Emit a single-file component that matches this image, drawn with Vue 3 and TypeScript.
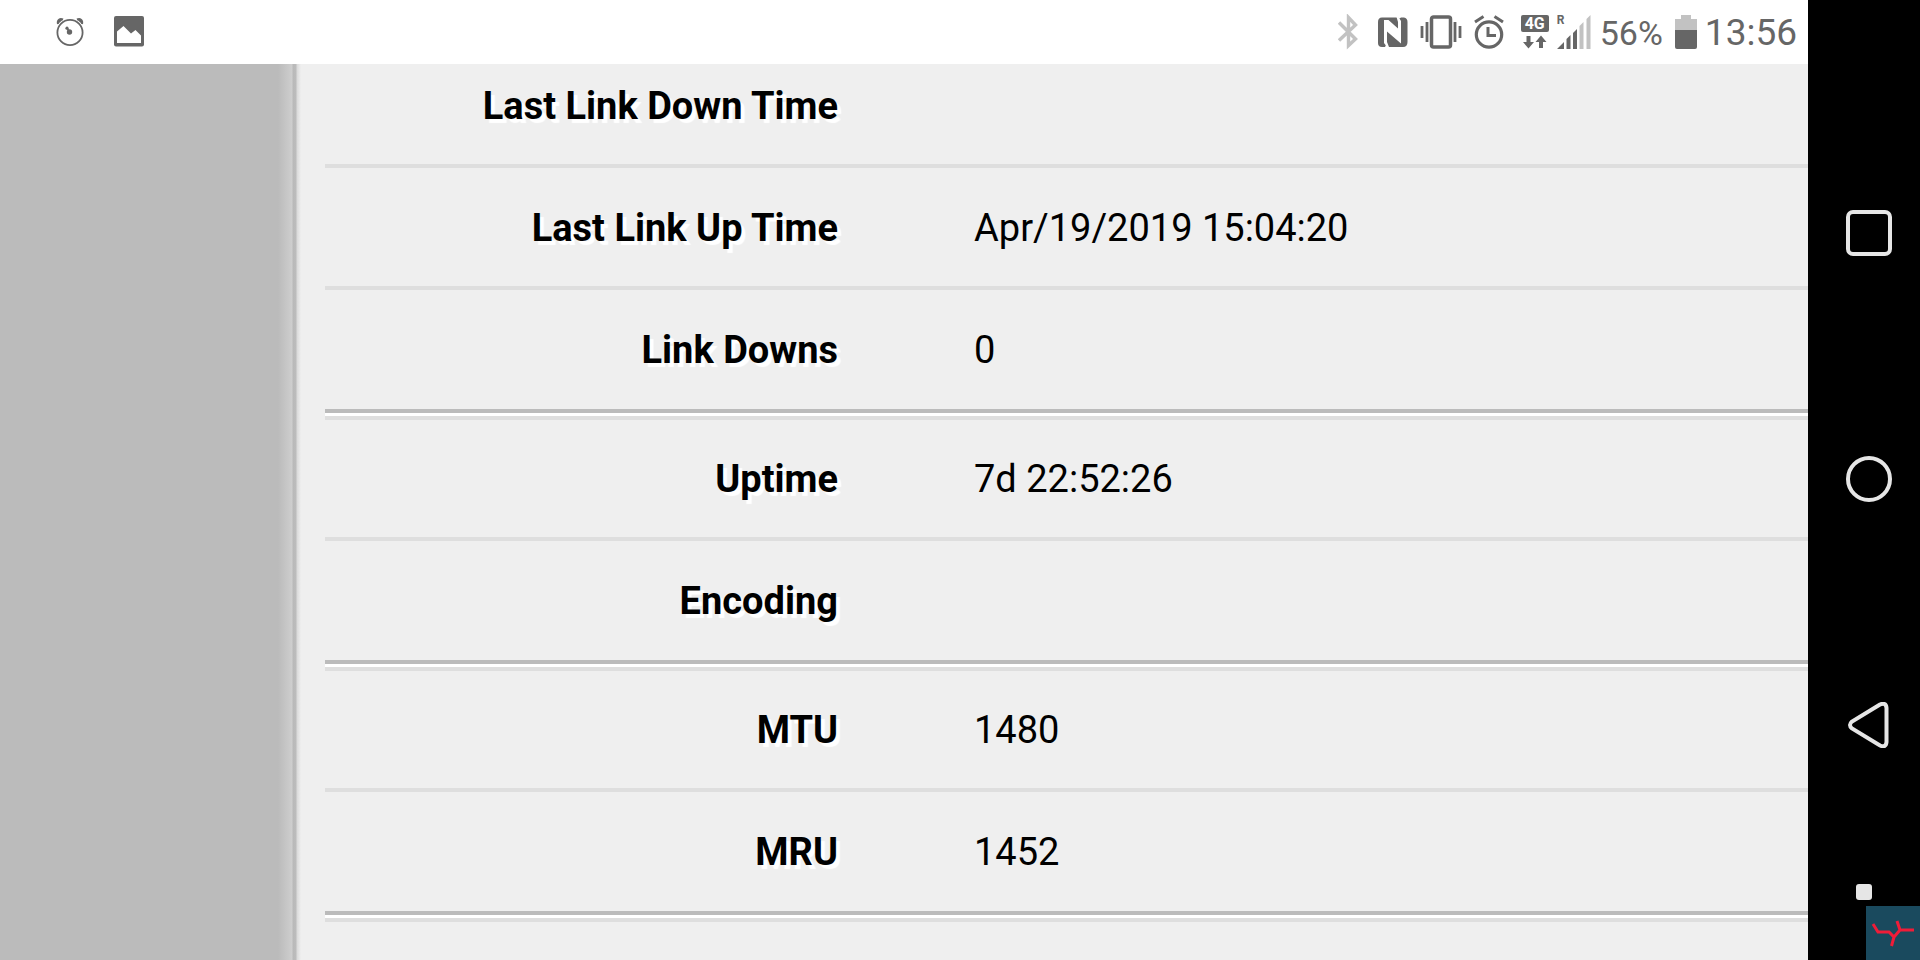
<script setup lang="ts">
interface Row { label: string; value: string }

const groups: Row[][] = [
  [
    { label: 'Last Link Down Time', value: '' },
    { label: 'Last Link Up Time', value: 'Apr/19/2019 15:04:20' },
    { label: 'Link Downs', value: '0' },
  ],
  [
    { label: 'Uptime', value: '7d 22:52:26' },
    { label: 'Encoding', value: '' },
  ],
  [
    { label: 'MTU', value: '1480' },
    { label: 'MRU', value: '1452' },
  ],
]
</script>

<template>
  <div class="screen">
    <div class="display">
      <header class="status">
        <div class="notices">
          <svg width="28" height="30" viewBox="0 0 28 30" aria-hidden="true">
            <path d="M2 7C1 3 4 1 7 2.500M26 7C27 3 24 1 21 2.500" fill="#666" stroke="#666" stroke-width="2" />
            <circle cx="14" cy="15.500" r="12.600" fill="#fff" stroke="#666" stroke-width="1.800" />
            <path d="M11 11l2.500 4" stroke="#666" stroke-width="1.500" />
            <circle cx="11" cy="11.200" r="1.600" fill="#666" />
            <circle cx="13.500" cy="15" r="2.700" fill="#666" />
          </svg>
          <svg width="30" height="32" viewBox="0 0 30 32" aria-hidden="true">
            <rect width="30" height="30.500" rx="2" fill="#666" />
            <path d="M3 27V15.500L9.500 10 17 17.500 21.500 14 27 19.500V27z" fill="#fff" />
          </svg>
        </div>
        <div class="indicators">
          <svg class="bluetooth" width="22" height="36" viewBox="0 0 22 36" aria-hidden="true">
            <path d="M1 8.500L17.500 25 10.500 31.500V3.500L17.500 11 1 26.500" fill="none" stroke="#c2c2c2" stroke-width="3.400" />
          </svg>
          <svg class="nfc" width="30" height="30" viewBox="0 0 30 30" aria-hidden="true">
            <path d="M4 0.500H20L21.500 1.500 23 0.500H26Q29.500 1 29.500 5V25Q29.500 30 25 30H10L8 28 7 30H4Q0 30 0 26V5Q0 0.500 4 0.500z" fill="#666" />
            <path d="M6 3H10.500L20 11.500V5L18.500 0H20.500L23 4V26.500L9 14.500V25L11 30H9L6 26z" fill="#fff" />
          </svg>
          <svg class="vibrate" width="42" height="34" viewBox="0 0 42 34" aria-hidden="true">
            <rect x="11.500" y="2" width="19" height="30" rx="2" fill="none" stroke="#666" stroke-width="3.500" />
            <path d="M2 11v12M7 7v20M35 7v20M40 11v12" stroke="#666" stroke-width="2.800" />
          </svg>
          <svg class="alarm" width="30" height="34" viewBox="0 0 30 34" aria-hidden="true">
            <circle cx="15" cy="19.500" r="12.700" fill="none" stroke="#666" stroke-width="3.200" />
            <path d="M1 7L9.500 1.500M20.500 1.500L29 7" stroke="#666" stroke-width="3" />
            <path d="M14 12V20.500H22" fill="none" stroke="#666" stroke-width="3" />
          </svg>
          <div class="network">
            <span class="generation">4G</span>
            <svg width="24" height="14" viewBox="0 0 24 14" aria-hidden="true">
              <path d="M3.500 1H7.500V7H11L5.500 13.500 0 7H3.500zM16 13H20V7H23.500L18 0.500 12.500 7H16z" fill="#666" />
            </svg>
          </div>
          <div class="signal">
            <span class="roaming">R</span>
            <svg width="34" height="34" viewBox="0 0 34 34" aria-hidden="true">
              <path d="M0 34L7 27V34zM9.500 34V24L13.500 20V34zM16 34V18L20 14V34z" fill="#666" />
              <path d="M22.500 34V11L26.500 7V34zM29.500 34V4L33.500 0V34z" fill="#c2c2c2" />
            </svg>
          </div>
          <span class="charge">56%</span>
          <svg class="battery" width="22" height="34" viewBox="0 0 22 34" aria-hidden="true">
            <path d="M0 4H6V0H16V4H22V15H0z" fill="#c2c2c2" />
            <path d="M0 15H22V32Q22 34 20 34H2Q0 34 0 32z" fill="#666" />
          </svg>
          <time class="clock">13:56</time>
        </div>
      </header>
      <div class="page">
        <aside class="side"></aside>
        <main class="content">
          <table>
            <tbody v-for="(group, i) in groups" :key="i">
              <tr v-for="row in group" :key="row.label">
                <th scope="row">{{ row.label }}</th>
                <td>{{ row.value }}</td>
              </tr>
            </tbody>
            <tbody class="rest"><tr><td colspan="2"></td></tr></tbody>
          </table>
        </main>
      </div>
    </div>
    <nav class="keys">
      <button aria-label="Recent apps">
        <svg width="46" height="46" viewBox="0 0 46 46"><rect x="2" y="2" width="42" height="42" rx="5" /></svg>
      </button>
      <button aria-label="Home">
        <svg width="46" height="46" viewBox="0 0 46 46"><circle cx="23" cy="23" r="21" /></svg>
      </button>
      <button aria-label="Back">
        <svg width="46" height="46" viewBox="0 0 46 46"><path d="M34 2.500L6 19.500Q2 23 6 26.500L34 43.500Q40 46 40.500 40V6Q40 0 34 2.500z" /></svg>
      </button>
      <button class="dot" aria-label="Hide navigation"></button>
      <svg class="badge" width="54" height="54" viewBox="0 0 54 54" aria-hidden="true">
        <path d="M7 18L12 26H23L28 31 34 24H48M31 15L34 24M28 31L25.500 40" />
      </svg>
    </nav>
  </div>
</template>

<style>
body { margin: 0; }
</style>

<style scoped>
* { box-sizing: border-box; }
.screen {
  display: flex;
  height: 100vh;
  overflow: hidden;
  background: #000;
  font-family: Roboto, sans-serif;
}
.display { flex: 1; display: flex; flex-direction: column; min-width: 0; }
.status {
  flex: none;
  display: flex;
  align-items: center;
  justify-content: space-between;
  height: 64px;
  padding: 0 11px 0 56px;
  background: #fff;
  color: #666;
}
.notices { display: flex; align-items: center; gap: 30px; }
.indicators { display: flex; align-items: center; }
.bluetooth { margin-right: 18px; }
.nfc { margin-right: 12px; }
.vibrate { margin-right: 12px; }
.alarm { margin-right: 17px; }
.network {
  display: flex;
  flex-direction: column;
  align-items: center;
  gap: 3px;
  width: 28px;
  margin-right: 8px;
}
.generation {
  width: 28px;
  height: 17px;
  border-radius: 2px;
  background: #666;
  color: #fff;
  font-size: 16px;
  font-weight: 700;
  line-height: 17px;
  text-align: center;
}
.signal { position: relative; display: flex; margin-right: 9px; }
.roaming { position: absolute; left: 0; top: -2px; font-size: 12px; line-height: 14px; font-weight: 700; }
.charge, .clock { padding-top: 2px; line-height: 40px; }
.charge { font-size: 34px; margin-right: 12px; }
.battery { margin-right: 8px; }
.clock { font-size: 37px; }
.page { flex: 1; display: flex; min-height: 0; background: #efefef; }
.side {
  flex: none;
  width: 301px;
  background: linear-gradient(to right, #bbb 278px, #cecece 292px, #b9b9b9 293px, #bcbcbc 296px, #dadada 297px, #efefef 301px);
}
.content { flex: 1; padding-left: 24px; overflow: hidden; }
table { width: 100%; border-collapse: separate; border-spacing: 0; table-layout: fixed; }
th, td {
  height: 122px;
  padding: 0 0 36px;
  border-bottom: 4px solid #dedede;
  color: #000;
  font-size: 38px;
  line-height: 44px;
  vertical-align: bottom;
}
th { width: 513px; text-align: right; font-weight: 700; text-shadow: 4px 4px 1px #fff; }
td { padding-left: 136px; }
tbody:first-child tr:first-child > * { height: 104px; }
tbody tr:last-child > * { height: 123px; padding-bottom: 37px; border-bottom: 4px solid #bbb; }
tbody + tbody tr:first-child > * { height: 128px; box-shadow: inset 0 3px #fff, inset 0 7px #dedede; }
tbody.rest td { border-bottom: 0; }
.keys {
  position: relative;
  flex: none;
  display: flex;
  flex-direction: column;
  align-items: center;
  width: 112px;
  padding: 210px 0 0 10px;
  gap: 200px;
}
button { padding: 0; border: 0; background: none; }
.keys button svg { display: block; fill: none; stroke: #e6e6e6; stroke-width: 4; }
.keys .dot { position: absolute; left: 48px; bottom: 60px; width: 16px; height: 16px; border-radius: 3px; background: #e6e6e6; }
.badge { position: absolute; right: 0; bottom: 0; background: #1a4a5e; fill: none; stroke: #f01c38; stroke-width: 3; }
</style>
